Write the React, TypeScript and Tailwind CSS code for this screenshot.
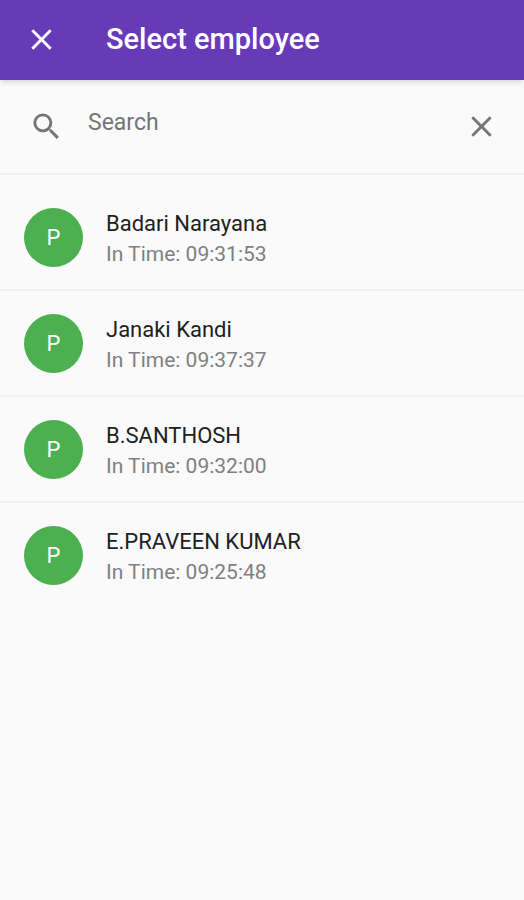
import { MdClose, MdSearch } from 'react-icons/md';

const employees = [
  { name: 'Badari Narayana', inTime: '09:31:53' },
  { name: 'Janaki Kandi', inTime: '09:37:37' },
  { name: 'B.SANTHOSH', inTime: '09:32:00' },
  { name: 'E.PRAVEEN KUMAR', inTime: '09:25:48' },
];

export default function App() {
  return (
    <div className="min-h-screen bg-[#fafafa] font-[Roboto,sans-serif]">
      {/* App bar */}
      <header className="flex h-20 items-center bg-[#673ab7] pl-6 text-white shadow-md">
        <button type="button" aria-label="Close" className="pb-0.5">
          <MdClose className="size-[35px]" />
        </button>
        <h1 className="ml-[47px] text-[29px] font-medium">Select employee</h1>
      </header>

      {/* Search */}
      <div className="flex h-[95px] items-center border-b-2 border-[#f0f0f0] pr-[25px] pl-[29px] text-[#757575]">
        <MdSearch className="size-[35px]" />
        <input
          type="text"
          aria-label="Search"
          placeholder="Search"
          className="ml-6 min-w-0 flex-1 pb-1.5 text-[23px] outline-none placeholder:text-[#757575]"
        />
        <button type="button" aria-label="Clear search">
          <MdClose className="size-[35px]" />
        </button>
      </div>

      {/* Employee list */}
      <ul className="pt-2.5">
        {employees.map((employee) => (
          <li
            key={employee.name}
            className="flex h-[106px] items-center gap-[23px] border-b-2 border-[#f0f0f0] px-6 last:border-transparent"
          >
            <div className="flex size-[59px] shrink-0 items-center justify-center rounded-full bg-[#4caf50] text-[22px] text-white">
              P
            </div>
            <div className="pt-1">
              <p className="text-[22px] leading-[30px] text-[#212121]">{employee.name}</p>
              <p className="text-[21px] leading-[30px] text-[#808080]">In Time: {employee.inTime}</p>
            </div>
          </li>
        ))}
      </ul>
    </div>
  );
}
